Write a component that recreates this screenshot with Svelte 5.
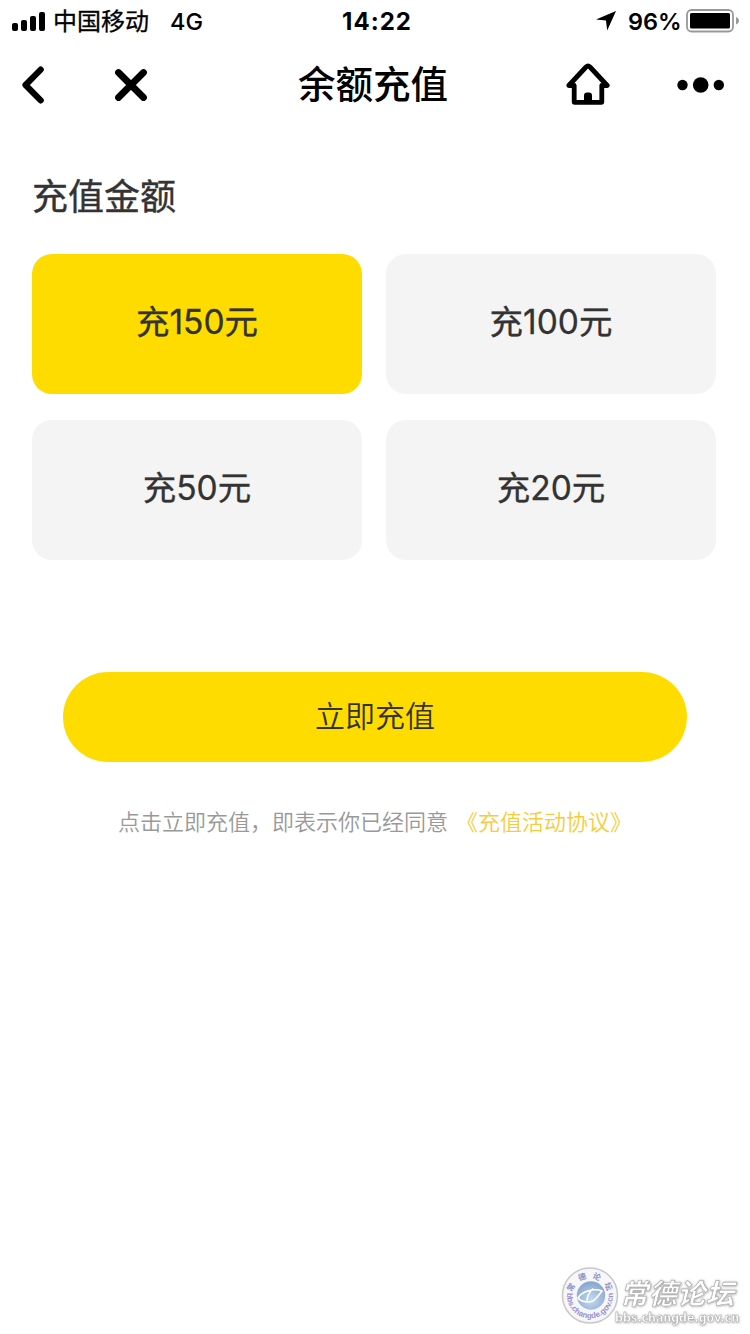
<script>
  const amounts = [150, 100, 50, 20];
  let selected = $state(150);
</script>

<div class="page">
  <div class="status-bar">
    <div class="carrier">
      <svg class="signal" width="33" height="21" viewBox="0 0 33 21">
        <rect x="0" y="12" width="6" height="8" rx="2" />
        <rect x="9" y="9" width="6" height="11" rx="2" />
        <rect x="18" y="5" width="6" height="15" rx="2" />
        <rect x="27" y="1" width="6" height="19" rx="2" />
      </svg>
      <span class="operator">中国移动</span>
      <span class="network">4G</span>
    </div>
    <span class="time">14:22</span>
    <div class="power">
      <svg class="location" width="20" height="20" viewBox="0 0 20 20">
        <path d="M20 0 11.2 19.5 10 9.4 0 8.4Z" />
      </svg>
      <span class="percent">96%</span>
      <svg class="battery" width="53" height="24" viewBox="0 0 53 24">
        <rect x="1" y="1" width="46" height="21.5" rx="4.5" fill="none" stroke="#999" stroke-width="1.8" />
        <rect x="4" y="4" width="40" height="15.5" rx="1.5" />
        <path d="M50 8c4 1.5 4 6 0 7.5Z" fill="#999" />
      </svg>
    </div>
  </div>

  <header class="nav-bar">
    <button class="icon-btn back" aria-label="返回">
      <svg width="24" height="38" viewBox="0 0 24 38">
        <path d="M19.7 3.6 4.5 19l15.2 15.4" fill="none" stroke="#000" stroke-width="6.2" stroke-linecap="round" stroke-linejoin="round" />
      </svg>
    </button>
    <button class="icon-btn close" aria-label="关闭">
      <svg width="34" height="34" viewBox="0 0 34 34">
        <path d="M4.5 4.5 29.5 29.5M29.5 4.5 4.5 29.5" stroke="#000" stroke-width="6.8" stroke-linecap="round" />
      </svg>
    </button>
    <h1>余额充值</h1>
    <button class="icon-btn home" aria-label="首页">
      <svg width="46" height="45" viewBox="0 0 46 45">
        <path
          d="M8.2 22.5H2.8L20 4Q22 2 24 4L41.2 22.5H35.8V39.3H8.2Z"
          fill="none"
          stroke="#000"
          stroke-width="4.8"
          stroke-linejoin="round"
        />
        <path d="M18 40V32.5q0-3 3-3h2q3 0 3 3V40Z" />
      </svg>
    </button>
    <button class="icon-btn more" aria-label="更多">
      <svg width="48" height="18" viewBox="0 0 48 18">
        <circle cx="5.5" cy="9" r="5.2" />
        <circle cx="23.7" cy="9" r="7.8" />
        <circle cx="41.8" cy="9" r="5.2" />
      </svg>
    </button>
  </header>

  <main>
    <h2>充值金额</h2>
    <div class="amounts">
      {#each amounts as amount}
        <button
          class="amount"
          class:active={amount === selected}
          onclick={() => (selected = amount)}
        >
          充{amount}元
        </button>
      {/each}
    </div>

    <button class="submit">立即充值</button>

    <p class="agreement">
      <span>点击立即充值，即表示你已经同意</span>
      <span class="link">《充值活动协议》</span>
    </p>
  </main>

  <!-- Forum watermark over the bottom right corner -->
  <svg class="watermark" width="190" height="74" viewBox="0 0 190 74">
    <defs>
      <radialGradient id="ball" cx="50%" cy="65%" r="60%">
        <stop offset="0" stop-color="#c3daf0" />
        <stop offset="1" stop-color="#8ba8cf" />
      </radialGradient>
      <path id="arc-top" d="M12 36.5a18 18 0 0 1 36 0" />
      <path id="arc-bottom" d="M7.5 30.5a23 23 0 1 0 45 0" />
      <filter id="edge" x="-10%" y="-20%" width="120%" height="150%">
        <feDropShadow dx="0.4" dy="0.5" stdDeviation="0.8" flood-color="#555" flood-opacity="0.6" />
      </filter>
    </defs>
    <circle cx="30" cy="35.5" r="27.5" fill="#f7f7fa" stroke="#c8c8cc" stroke-width="1.6" />
    <circle cx="31" cy="35.5" r="14.2" fill="url(#ball)" />
    <path
      d="M42 31c-8-3-20 0-24 7 3 4 11 5 15 3 3-2 6-6 9-10ZM33 28.500c-4 4-6 8-6 13"
      fill="none"
      stroke="#fff"
      stroke-width="1.6"
    />
    <text class="seal-name" text-anchor="middle">
      <textPath href="#arc-top" startOffset="53%">常德论坛</textPath>
    </text>
    <text class="seal-url" text-anchor="middle">
      <textPath href="#arc-bottom" startOffset="50%">bbs.changde.gov.cn</textPath>
    </text>
    <g filter="url(#edge)">
      <text class="forum-name" x="60" y="44" textLength="114">常德论坛</text>
      <text class="forum-url" x="55" y="62" textLength="124" lengthAdjust="spacingAndGlyphs">bbs.changde.gov.cn</text>
    </g>
  </svg>
</div>

<style>
  :global(body) {
    margin: 0;
    background: #fff;
  }

  .page {
    position: relative;
    width: 750px;
    height: 1334px;
    overflow: hidden;
    background: #fff;
    color: #333;
    font-family: Inter, "Noto Sans CJK SC", sans-serif;
  }

  button {
    padding: 0;
    border: none;
    font-family: inherit;
    color: inherit;
    cursor: pointer;
  }

  svg {
    display: block;
  }

  .status-bar {
    display: grid;
    grid-template-columns: 1fr auto 1fr;
    align-items: center;
    height: 40px;
    padding: 0 11px 0 12px;
    color: #000;
    font-size: 24px;
    line-height: 40px;
  }

  .carrier,
  .power {
    display: flex;
    align-items: center;
  }

  .operator {
    margin: 2px 0 0 8px;
    -webkit-text-stroke: 0.3px;
  }

  .network {
    margin-left: 21px;
    padding-top: 1px;
    font-size: 23.5px;
    font-weight: 500;
  }

  .time {
    padding: 1px 0 0 3px;
    font-weight: 700;
    letter-spacing: 1px;
  }

  .power {
    justify-content: flex-end;
  }

  .percent {
    width: 52px;
    margin: 1px 6px 0 12px;
    font-size: 23.5px;
    font-weight: 600;
  }

  .battery {
    flex: none;
  }

  .nav-bar {
    display: grid;
    grid-template-columns: 93px 184px 1fr 111px 48px;
    align-items: center;
    height: 90px;
    padding: 0 25px 0 21px;
    color: #000;
  }

  .icon-btn {
    justify-self: start;
    background: none;
  }

  h1 {
    margin: 0;
    font-size: 37.5px;
    font-weight: 500;
    line-height: 50px;
    white-space: nowrap;
  }

  main {
    padding: 41px 34px 0 32px;
  }

  h2 {
    margin: 0 0 31px;
    font-size: 36px;
    font-weight: 400;
    line-height: 52px;
    -webkit-text-stroke: 0.4px;
  }

  .amounts {
    display: grid;
    grid-template-columns: 330px 330px;
    gap: 26px 24px;
  }

  .amount {
    height: 140px;
    padding-bottom: 9px;
    border-radius: 20px;
    background: #f4f4f4;
    font-size: 33.5px;
    font-weight: 400;
    -webkit-text-stroke: 0.3px;
  }

  .amount.active {
    background: #ffdc00;
  }

  .submit {
    display: block;
    width: 624px;
    height: 90px;
    margin: 112px 0 0 31px;
    padding-bottom: 7px;
    border-radius: 45px;
    background: #ffdc00;
    font-size: 30px;
    font-weight: 350;
  }

  .agreement {
    display: flex;
    justify-content: center;
    gap: 8px;
    margin: 44px 0 0 2px;
    color: #999;
    font-size: 22px;
    font-weight: 350;
    line-height: 32px;
  }

  .link {
    color: #f6cc3c;
  }

  .watermark {
    position: absolute;
    right: 0;
    bottom: 0;
    overflow: visible;
  }

  .seal-name {
    fill: #8f8fc8;
    font-family: "Noto Sans CJK SC", sans-serif;
    font-size: 8px;
    font-weight: 700;
    letter-spacing: 5px;
  }

  .seal-url {
    fill: #9a92cc;
    font-family: "Liberation Sans", sans-serif;
    font-size: 8px;
    font-weight: 700;
  }

  .forum-name {
    fill: #fff;
    stroke: #aaa;
    stroke-width: 0.6px;
    font-family: "Noto Sans CJK SC", sans-serif;
    font-size: 28px;
    font-style: italic;
    font-weight: 700;
  }

  .forum-url {
    fill: #fff;
    stroke: #999;
    stroke-width: 0.4px;
    font-family: "DejaVu Sans", sans-serif;
    font-size: 13px;
    font-weight: 700;
  }
</style>
